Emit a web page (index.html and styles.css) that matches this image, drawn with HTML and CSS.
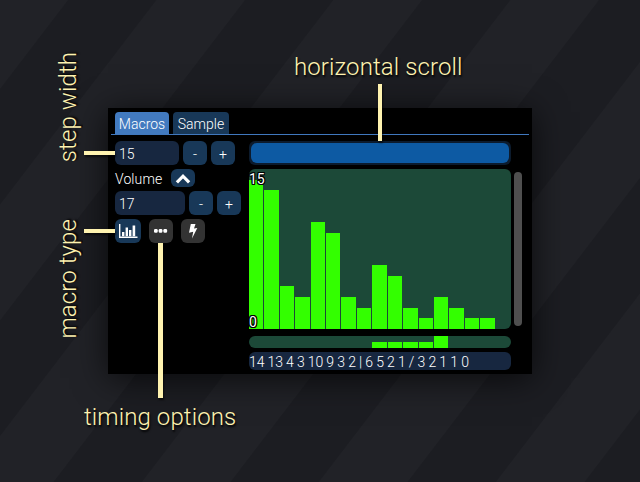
FILE: index.html
```html
<!DOCTYPE html>
<html lang="en">
<head>
<meta charset="utf-8">
<title>Macro editor</title>
<link rel="stylesheet" href="styles.css">
</head>
<body>
<main class="stage">
  <section class="window">
    <nav class="tabs"><span class="tab active">Macros</span><span class="tab sample">Sample</span></nav>
    <div class="body">
      <div class="controls">
        <div class="row"><span class="input">15</span><span class="btn">-</span><span class="btn">+</span></div>
        <div class="row name"><span class="label">Volume</span><span class="btn small"><svg width="24" height="18" viewBox="0 0 24 18"><path d="M7 12.300 12 7.200l5 5.100" fill="none" stroke="#fff" stroke-width="3.200" stroke-linecap="square"/></svg></span></div>
        <div class="row"><span class="input wide">17</span><span class="btn">-</span><span class="btn">+</span></div>
        <div class="row icons">
          <span class="btn type"><svg width="26" height="24" viewBox="0 0 26 24"><path d="M4.700 5v13.300H22.500" fill="none" stroke="#fff" stroke-width="1.400"/><path d="M7 13h2.400v4.200H7zM10.600 8.500h2.400v8.700h-2.400zM14 11h2.400v6.200h-2.400zM17.600 6.500h2.600v10.700h-2.600z" fill="#fff"/></svg></span>
          <span class="btn gray"><svg width="24" height="24" viewBox="0 0 24 24"><g fill="#fff"><rect x="5" y="10" width="3.700" height="3.700" rx="1.200"/><rect x="9.700" y="10" width="3.700" height="3.700" rx="1.200"/><rect x="14.400" y="10" width="3.700" height="3.700" rx="1.200"/></g></svg></span>
          <span class="btn gray"><svg width="24" height="24" viewBox="0 0 24 24"><path d="M9.800 5h4.700L13 9.500l3.300-.6L11 19.500l1.200-6.700-4.200.9z" fill="#fff"/></svg></span>
        </div>
      </div>
      <div class="editor">
        <div class="scroll"><div class="thumb"></div></div>
        <div class="graph">
          <div class="chart">
            <i style="height:149px"></i><i style="height:139px"></i><i style="height:43px"></i><i style="height:32px"></i><i style="height:107px"></i><i style="height:96px"></i><i style="height:32px"></i><i style="height:21px"></i><i style="height:64px"></i><i style="height:53px"></i><i style="height:21px"></i><i style="height:11px"></i><i style="height:32px"></i><i style="height:21px"></i><i style="height:11px"></i><i style="height:11px"></i><i style="height:0"></i>
            <b class="max">15</b><b class="min">0</b>
          </div>
          <div class="vscroll"></div>
        </div>
        <div class="chart loop">
          <i></i><i></i><i></i><i></i><i></i><i></i><i></i><i></i><i style="height:6px"></i><i style="height:6px"></i><i style="height:6px"></i><i style="height:6px"></i><i style="height:12px"></i><i></i><i></i><i></i><i></i>
        </div>
        <div class="sequence">14 13 4 3 10 9 3 2 | 6 5 2 1 / 3 2 1 1 0</div>
      </div>
    </div>
  </section>
  <span class="note step">step width</span>
  <span class="note macro">macro type</span>
  <span class="note horizontal">horizontal scroll</span>
  <span class="note timing">timing options</span>
  <span class="line l-step"></span><span class="line l-macro"></span><span class="line l-scroll"></span><span class="line l-timing"></span>
</main>
</body>
</html>
```
FILE: styles.css
```css
* { box-sizing: border-box; }
body { margin: 0; font-family: Roboto, "Liberation Sans", sans-serif; font-weight: 300; }
.stage {
  position: relative; width: 640px; height: 482px; overflow: hidden;
  padding: 108px;
  background: repeating-linear-gradient(127.400deg, #212227 0 53.500px, #1c1d22 54.500px 123.800px, #212227 124.800px 140.600px);
}
.window {
  width: 424px; height: 266px; padding: 4px 3px 0; background: #000; color: #fff;
  box-shadow: 0 4px 32px rgba(0,0,0,.7); font-size: 14px;
}
.tabs { display: flex; gap: 4px; height: 23px; padding-left: 4px; border-bottom: 1px solid #4078be; }
.tab { width: 54px; height: 22px; border-radius: 4px 4px 0 0; background: #183858; text-align: center; line-height: 25px; }
.tab.active { background: #427abf; }
.tab.sample { width: 56px; }
.body { display: flex; padding: 6px 0 0 4px; }
.controls { width: 134px; }
.row { display: flex; gap: 4px; height: 24px; margin-bottom: 4px; }
.input { width: 64px; border-radius: 6px; background: #172740; padding-left: 4px; line-height: 27px; }
.input.wide { width: 70px; }
.btn { width: 24px; height: 24px; border-radius: 6px; background: #183858; text-align: center; line-height: 26px; }
.btn svg { display: block; }
.row.name { height: 18px; gap: 8px; }
.label { width: 48px; line-height: 21px; letter-spacing: .1px; }
.btn.small { height: 18px; }
.icons { gap: 8px; }
.btn.type { width: 26px; }
.btn.gray { background: #333; }
.editor { width: 278px; }
.scroll { width: 262px; height: 24px; padding: 2px; border-radius: 6px; background: #0c1b2d; }
.thumb { height: 20px; border-radius: 6px; background: #0d5aa3; }
.graph { display: flex; gap: 3px; margin-top: 4px; height: 160px; }
.chart { position: relative; display: grid; grid-template-columns: repeat(17, 1fr); column-gap: 1px; align-items: end; width: 262px; height: 160px; padding-right: 1px; border-radius: 6px; background: #1c4938; }
.chart i { background: #3f0; }
.chart b { position: absolute; left: 0; font-weight: 400; line-height: 16px; text-shadow: -1px 0 #000, 1px 0 #000, 0 -1px #000, 0 1px #000, 1px 1px #000, -1px -1px #000, 1px -1px #000, -1px 1px #000; }
.chart .max { top: 2px; }
.chart .min { bottom: -1px; }
.vscroll { width: 8px; height: 154px; margin-top: 3px; border-radius: 4px; background: #4f4f4f; }
.chart.loop { height: 12px; margin-top: 7px; }
.sequence { width: 262px; height: 18px; margin-top: 4px; border-radius: 6px; background: #172740; line-height: 21px; white-space: nowrap; letter-spacing: -.14px; }
.note { position: absolute; color: #fff3b0; font-size: 24px; line-height: 28px; white-space: nowrap; letter-spacing: .1px; text-shadow: 1px 2px 2px #000; }
.horizontal { left: 294px; top: 53px; }
.timing { left: 84px; top: 403px; }
.step, .macro { writing-mode: vertical-rl; transform: rotate(180deg); left: 54px; }
.step { top: 52px; }
.macro { top: 219px; }
.line { position: absolute; background: #fff3b0; box-shadow: 1px 2px 2px rgba(0,0,0,.6); }
.l-step, .l-macro { left: 84px; width: 31px; height: 4px; top: 151px; }
.l-macro { top: 229px; }
.l-scroll { left: 378px; top: 84px; width: 4px; height: 57px; }
.l-timing { left: 158px; top: 243px; width: 5px; height: 155px; }
```
